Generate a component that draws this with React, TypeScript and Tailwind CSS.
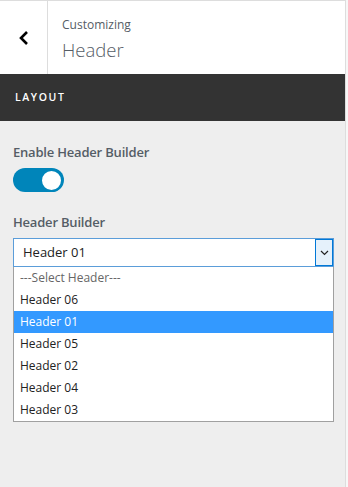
import { useState } from 'react';

const options = ['---Select Header---', 'Header 06', 'Header 01', 'Header 05', 'Header 02', 'Header 04', 'Header 03'];

const App = () => {
  const [selected, setSelected] = useState('Header 01');
  const [enabled, setEnabled] = useState(true);

  return (
    <div className="w-[348px] h-[487px] bg-[#f7f7f7] flex font-['Open_Sans',sans-serif]">
      <div className="w-[346px] h-full bg-[#eeeeee] border-r border-[#dddddd] flex flex-col">
        {/* header */}
        <div className="h-[74px] bg-white border-t border-[#dddddd] flex">
          <button className="w-[48px] border-r border-[#dddddd] flex items-center justify-center">
            <svg width="14" height="16" viewBox="0 0 14 16">
              <path d="M10 2 L4 8 L10 14" fill="none" stroke="#000" strokeWidth="2.6" />
            </svg>
          </button>
          <div className="flex flex-col pl-[14px] pt-[15px]">
            <span className="text-[12px] leading-[18px] text-[#555d66]">Customizing</span>
            <span className="text-[18.5px] leading-[28px] font-light text-[#555d66] mt-[2px]">Header</span>
          </div>
        </div>

        {/* section title */}
        <div className="h-[47px] bg-[#333333] flex items-center px-[15px]">
          <span className="text-[10.5px] font-semibold tracking-[1.6px] text-white">LAYOUT</span>
        </div>

        {/* body */}
        <div className="flex flex-col px-[13px] pt-[21px]">
          <label className="text-[13px] leading-[20px] font-semibold tracking-[-0.2px] text-[#555d66]">Enable Header Builder</label>
          <button
            onClick={() => setEnabled(!enabled)}
            className={
              enabled
                ? 'mt-[6px] w-[51px] h-[24px] rounded-full bg-[#0085ba] flex items-center justify-end px-[1px]'
                : 'mt-[6px] w-[51px] h-[24px] rounded-full bg-[#b4b9be] flex items-center justify-start px-[1px]'
            }
          >
            <span className="w-[23px] h-[23px] rounded-full bg-white border-2 border-[#0085ba]" />
          </button>

          <label className="mt-[20px] text-[13px] leading-[20px] font-semibold tracking-[-0.2px] text-[#555d66]">Header Builder</label>
          <div className="mt-[6px] w-[321px]">
            <div className="h-[29px] bg-white border border-[#5b9dd9] flex items-stretch">
              <span className="flex-1 pl-[9px] text-[13px] leading-[27px] text-[#222]">{selected}</span>
              <span className="w-[18px] bg-[#e5f1fb] border border-[#0078d7] flex items-center justify-center">
                <svg width="9" height="6" viewBox="0 0 9 6">
                  <path d="M1 1 L4.5 4.5 L8 1" fill="none" stroke="#222" strokeWidth="1.2" />
                </svg>
              </span>
            </div>
            <ul className="bg-white border border-[#a0a0a0] border-t-0">
              {options.map((o, i) => (
                <li
                  key={o}
                  onClick={() => i > 0 && setSelected(o)}
                  className={
                    o === selected
                      ? 'h-[22px] pl-[6px] text-[12px] leading-[22px] bg-[#3399ff] text-white'
                      : i === 0
                        ? 'h-[22px] pl-[6px] text-[12px] leading-[22px] text-[#666]'
                        : 'h-[22px] pl-[6px] text-[12px] leading-[22px] text-[#222]'
                  }
                >
                  {o}
                </li>
              ))}
            </ul>
          </div>
        </div>
      </div>
    </div>
  );
};

export default App;
